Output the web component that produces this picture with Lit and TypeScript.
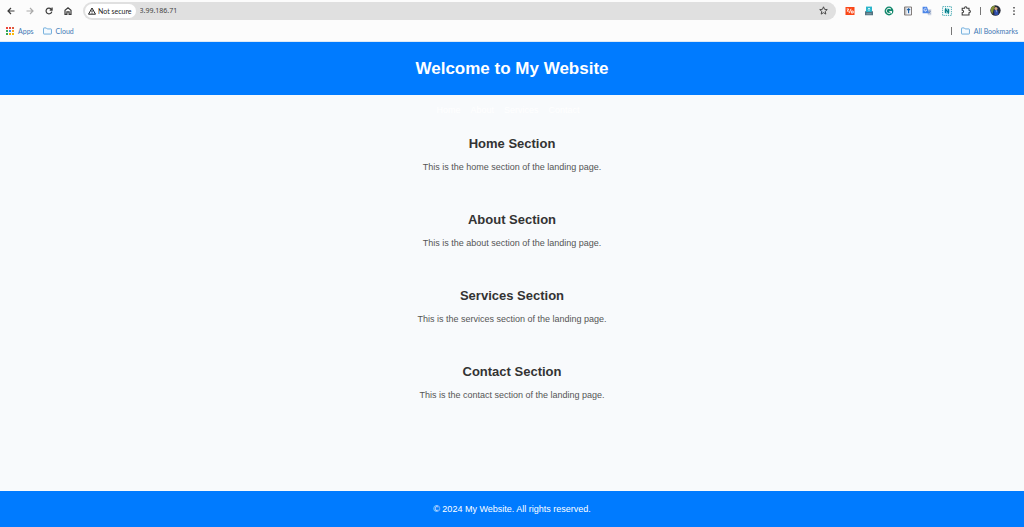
import { LitElement, html, css, svg } from "lit";
import { customElement } from "lit/decorators.js";

const folder = html`<svg class="folder" viewBox="0 0 10 8" aria-hidden="true">
  <path d="M.5 1.2Q.5.6 1.1.6H3.6L4.7 1.7H8.8Q9.4 1.7 9.4 2.3V6.8Q9.4 7.4 8.8 7.4H1.1Q.5 7.4.5 6.8Z" />
</svg>`;

const dotColors = ["#ea4335", "#e8453c", "#e05a3a", "#34a853", "#4285f4", "#f5a623", "#34a853", "#f9ab00", "#fbbc05"];

@customElement("browser-bar")
export class BrowserBar extends LitElement {
  static styles = css`
    :host {
      display: block;
      font-family: Lato, "Open Sans", sans-serif;
      background: #fcfcfc;
      border-bottom: 1px solid #dde9f5;
    }
    .toolbar {
      display: flex;
      align-items: center;
      height: 21px;
      padding: 0 6px 0 5px;
    }
    button {
      display: flex;
      align-items: center;
      justify-content: center;
      padding: 0;
      border: 0;
      background: none;
      font: inherit;
      color: #3c3c3c;
    }
    svg {
      display: block;
      fill: none;
      stroke: currentColor;
    }
    .nav {
      display: flex;
      gap: 7px;
    }
    .nav button {
      width: 12px;
      height: 12px;
    }
    .nav svg {
      width: 8px;
      height: 8px;
      stroke-width: 1.2;
    }
    .nav .off {
      color: #aaa;
    }
    .address {
      display: flex;
      flex: 1;
      align-items: center;
      height: 18px;
      margin-left: 9px;
      padding: 0 8px 0 2px;
      border-radius: 9px;
      background: #e0e0e0;
    }
    .chip {
      height: 14px;
      padding: 0 4px 0 3px;
      gap: 2px;
      border-radius: 7px;
      background: #fff;
      font-size: 7px;
      line-height: 14px;
      color: #222;
      white-space: nowrap;
    }
    .chip svg {
      width: 8px;
      height: 8px;
    }
    input {
      flex: 1;
      min-width: 0;
      height: 14px;
      padding: 0;
      margin-left: 4px;
      border: 0;
      outline: 0;
      background: none;
      font: 7px/14px "Noto Sans", sans-serif;
      color: #444;
    }
    .star svg {
      width: 9px;
      height: 9px;
    }
    .extensions {
      display: flex;
      align-items: center;
      justify-content: space-between;
      width: 126px;
      margin-left: 9px;
    }
    .extensions button {
      width: 10px;
      height: 12px;
    }
    .extensions svg {
      width: 10px;
      height: 10px;
    }
    .divider {
      width: 1px;
      height: 8px;
      background: #777;
    }
    .profile {
      display: flex;
      align-items: center;
      gap: 9px;
      margin-left: 9px;
    }
    .profile svg {
      width: 11px;
      height: 11px;
    }
    .profile .menu svg {
      width: 8px;
      height: 10px;
    }
    .bookmarks {
      display: flex;
      align-items: center;
      height: 20px;
      padding: 0 6px;
      gap: 9px;
      font-size: 7px;
      line-height: 10px;
    }
    .bookmarks a {
      display: flex;
      align-items: center;
      gap: 4px;
      color: #3f78b4;
      text-decoration: none;
      white-space: nowrap;
    }
    .dots {
      width: 8px;
      height: 8px;
      stroke: none;
    }
    .folder {
      width: 9px;
      height: 8px;
      stroke: #62a5d8;
      stroke-width: 1;
      fill: #f4faff;
    }
    .push {
      margin-left: auto;
    }
  `;

  render() {
    return html`
      <div class="toolbar">
        <div class="nav">
          <button aria-label="Back"><svg viewBox="0 0 8 8"><path d="M7.5 4H1M4 1L1 4L4 7" /></svg></button>
          <button class="off" aria-label="Forward"><svg viewBox="0 0 8 8"><path d="M.5 4H7M4 1L7 4L4 7" /></svg></button>
          <button aria-label="Reload"><svg viewBox="0 0 8 8"><path d="M6.8 4.6A2.9 2.9 0 1 1 6.2 2.1L7 3M7.1.6V3.1H4.7" /></svg></button>
          <button aria-label="Home"><svg viewBox="0 0 8 8"><path d="M1 7.4V3.2L4 .8L7 3.2V7.4H5.1V4.8H2.9V7.4Z" /></svg></button>
        </div>
        <div class="address">
          <button class="chip">
            <svg viewBox="0 0 8 8"><path d="M4 1L7.5 7.2H.5ZM4 3.2V5.2M4 5.7V6.5" /></svg>Not secure
          </button>
          <input aria-label="Address" value="3.99.186.71" />
          <button class="star" aria-label="Bookmark this page">
            <svg viewBox="0 0 10 10"><path d="M5 .9L6.2 3.7L9.2 4L6.9 6L7.6 9L5 7.4L2.4 9L3.1 6L.8 4L3.8 3.7Z" /></svg>
          </button>
        </div>
        <div class="extensions">
          <button aria-label="Percent extension">
            <svg viewBox="0 0 10 10"><path d="M.5 1H9.5V9H.5Z" fill="#fa4616" stroke="none" /><path d="M4 7.2L6.1 2.8M1.7 3H3.7L2.2 5.2H3.8M6.3 5H8.2V7H6.3Z" stroke="#fff" stroke-width=".9" /></svg>
          </button>
          <button aria-label="Reader extension">
            <svg viewBox="0 0 10 10"><path d="M2 .6H8V6H2Z" fill="#2bb5cb" stroke="none" /><path d="M1 5L3 6H7L9 5V9.3H1Z" fill="#52727f" stroke="none" /><path d="M5 5V2M3.8 3.2L5 2L6.2 3.2" stroke="#e7ffff" stroke-width=".8" /><path d="M2.4 7.8H7.6" stroke="#a8c5ce" stroke-width=".6" /></svg>
          </button>
          <button aria-label="Grammar extension">
            <svg viewBox="0 0 10 10"><circle cx="5" cy="5" r="4.4" fill="#11876b" stroke="none" /><path d="M7 3.2A2.6 2.6 0 1 0 7.5 5.6H5.3M7.5 5.2V7.3" stroke="#fff" /></svg>
          </button>
          <button aria-label="Book extension">
            <svg viewBox="0 0 10 10"><path d="M1.5 1H8.5V9H1.5Z" fill="#f0f3fa" stroke="#77716d" stroke-width=".9" /><path d="M2.8 1V9" stroke="#9b928a" stroke-width=".8" /><path d="M5.6 7.3V3M4.1 4.2L5.6 2.7L7.1 4.2" stroke="#175aa0" stroke-width="1.1" /></svg>
          </button>
          <button aria-label="Translate">
            <svg viewBox="0 0 10 10"><path d="M4.2 3.2H9.3V9.3H6Z" fill="#cbd3e2" stroke="none" /><path d="M.6.8H5L7.2 7.2H.6Z" fill="#4d86e8" stroke="none" /><path d="M4.6 3.1A1.4 1.4 0 1 0 4.7 4.3H3.4" stroke="#fff" stroke-width=".7" /><path d="M6.6 5.2H8.8M7.7 4.6V5.2M8.3 5.3L6.9 7.6M7.1 6L8.6 7.5" stroke="#5b78ad" stroke-width=".6" /></svg>
          </button>
          <button aria-label="Notes extension">
            <svg viewBox="0 0 10 10"><path d="M.6.6H9.4V9.4H.6Z" stroke="#35a2ab" stroke-width=".9" stroke-dasharray="1.3 .9" /><circle cx="5" cy="5" r="3" fill="#a9e3e6" stroke="none" /><path d="M3.6 7V3.2L6.4 6.8V3" stroke="#087b88" stroke-width="1.1" /></svg>
          </button>
          <button aria-label="Extensions">
            <svg viewBox="0 0 10 10"><path d="M1.2 2.2H3.5Q3.5.7 4.7.7T5.9 2.2H8V4.3Q9.4 4.3 9.4 5.5T8 6.7V9H1.2V6.8Q2.6 6.7 2.6 5.5T1.2 4.2Z" stroke-width="1.1" /></svg>
          </button>
        </div>
        <div class="profile">
          <span class="divider"></span>
          <button aria-label="Profile">
            <svg viewBox="0 0 12 12"><circle cx="6" cy="6" r="5.6" fill="#252a38" stroke="none" /><path d="M1.2 3.2Q3 .4 5.5 1L4 5L2.8 9.8Q0 7.4 1.2 3.2Z" fill="#829034" stroke="none" /><circle cx="6.5" cy="3.8" r="1.7" fill="#d8a786" stroke="none" /><path d="M4.5 6L6.5 5.5L9 6.2L9.3 10.5L5 11.3Z" fill="#304fae" stroke="none" /><path d="M6.3 5.7L7.3 5.7L6.8 8.3Z" fill="#eee" stroke="none" /></svg>
          </button>
          <button class="menu" aria-label="Menu">
            <svg viewBox="0 0 8 10"><path d="M3.3 1.7H4.7M3.3 5H4.7M3.3 8.3H4.7" stroke-width="1.4" /></svg>
          </button>
        </div>
      </div>
      <div class="bookmarks">
        <a href="#apps">
          <svg class="dots" viewBox="0 0 8 8" aria-hidden="true">
            ${dotColors.map((c, i) => svg`<rect x=${(i % 3) * 3} y=${Math.floor(i / 3) * 3} width="2" height="2" fill=${c} />`)}
          </svg>Apps</a>
        <a href="#cloud">${folder}Cloud</a>
        <span class="divider push"></span>
        <a href="#bookmarks">${folder}All Bookmarks</a>
      </div>
    `;
  }
}

@customElement("app-root")
export class AppRoot extends LitElement {
  static styles = css`
    :host {
      display: flex;
      flex-direction: column;
      min-height: 100vh;
      background: #f8fafc;
      font-family: "Liberation Sans", Arial, sans-serif;
      font-size: 9px;
      line-height: 14px;
      color: #555;
      text-align: center;
    }
    h1,
    h2,
    p {
      margin: 0;
    }
    .banner {
      padding: 16px;
      background: #007bff;
      color: #fff;
    }
    h1 {
      font-size: 17px;
      line-height: 21px;
    }
    .links {
      display: flex;
      justify-content: center;
      gap: 10px;
      padding: 8px 8px 0 0;
    }
    .links a {
      color: #fff;
      text-decoration: none;
    }
    main {
      flex: 1;
      padding-top: 9px;
    }
    section {
      padding: 10px 10px 28px;
    }
    h2 {
      margin-bottom: 8px;
      font-size: 13px;
      line-height: 16px;
      color: #333;
    }
    footer {
      padding: 11px;
      background: #007bff;
      color: #fff;
    }
  `;

  private names = ["Home", "About", "Services", "Contact"];

  render() {
    return html`
      <browser-bar></browser-bar>
      <header class="banner"><h1>Welcome to My Website</h1></header>
      <nav class="links">
        ${this.names.map((n) => html`<a href="#${n.toLowerCase()}">${n}</a>`)}
      </nav>
      <main>
        ${this.names.map(
          (n) => html`<section id=${n.toLowerCase()}>
            <h2>${n} Section</h2>
            <p>This is the ${n.toLowerCase()} section of the landing page.</p>
          </section>`
        )}
      </main>
      <footer><p>© 2024 My Website. All rights reserved.</p></footer>
    `;
  }
}
